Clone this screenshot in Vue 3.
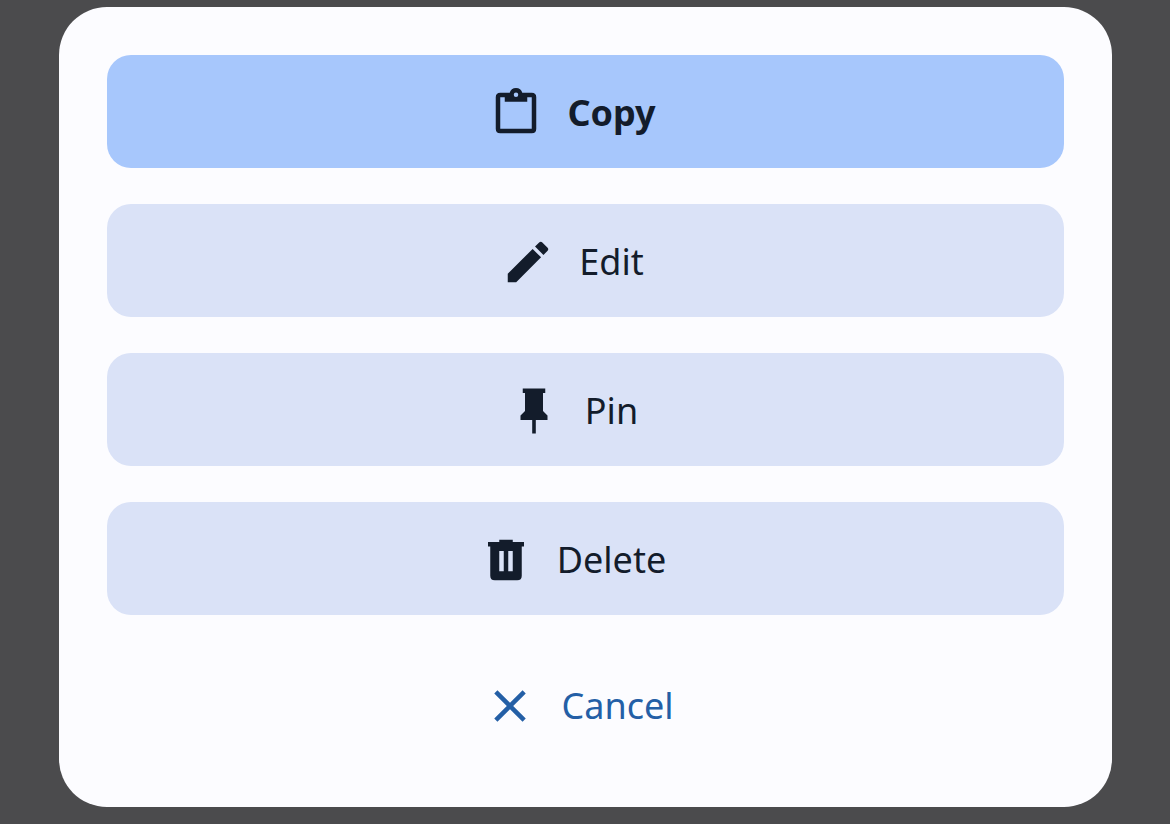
<script setup>
const actions = [
  { id: 'copy', label: 'Copy' },
  { id: 'edit', label: 'Edit' },
  { id: 'pin', label: 'Pin' },
  { id: 'delete', label: 'Delete' },
  { id: 'cancel', label: 'Cancel' },
]

const paths = {
  copy: 'M5 3H9.2A2.9 2.9 0 0 1 14.8 3H19Q21 3 21 5V19Q21 21 19 21H5Q3 21 3 19V5Q3 3 5 3ZM5 5V19H19V5H17V7H7V5ZM12 2.9A1 1 0 1 0 12 4.9A1 1 0 1 0 12 2.9Z',
  edit: 'M20.71 7.04C21.1 6.65 21.1 6 20.71 5.63L18.37 3.29C18 2.9 17.35 2.9 16.96 3.29L15.12 5.12L18.87 8.87M3 17.25V21H6.75L17.81 9.93L14.06 6.18L3 17.25Z',
  pin: 'M16 12V4H17V2H7V4H8V12L6 14V16H11.2V22H12.8V16H18V14Z',
  delete: 'M4 4H9V3H15V4H20V6H19V19Q19 21 17 21H7Q5 21 5 19V6H4ZM9 8V17H11V8ZM13 8V17H15V8Z',
  cancel: 'M19 6.41L17.59 5L12 10.59L6.41 5L5 6.41L10.59 12L5 17.59L6.41 19L12 13.41L17.59 19L19 17.59L13.41 12Z',
}
</script>

<template>
  <main class="scrim">
    <section class="sheet" role="dialog" aria-label="Message actions">
      <button
        v-for="action in actions"
        :key="action.id"
        type="button"
        class="action"
        :class="action.id"
      >
        <svg class="icon" viewBox="0 0 24 24" aria-hidden="true">
          <path :d="paths[action.id]" fill="currentColor" fill-rule="evenodd" />
        </svg>
        <span class="label">{{ action.label }}</span>
      </button>
    </section>
  </main>
</template>

<style>
body {
  margin: 0;
  background: #4b4b4d;
}
</style>

<style scoped>
.scrim {
  box-sizing: border-box;
  min-height: 100vh;
  padding: 7px 58px 17px 59px;
  background: #4b4b4d;
}

.sheet {
  box-sizing: border-box;
  display: flex;
  flex-direction: column;
  gap: 36px;
  padding: 48px 48px 46px;
  border-radius: 48px;
  background: #fcfcff;
}

.action {
  box-sizing: border-box;
  display: flex;
  align-items: center;
  justify-content: center;
  width: 100%;
  margin: 0;
  padding: 31px 26px 28px 24px;
  border: 0;
  border-radius: 24px;
  background: #dae2f7;
  color: #131c2b;
  font: 400 36px/54px "Noto Sans", sans-serif;
  cursor: pointer;
}

.copy {
  background: #a7c7fc;
  font-weight: 700;
}

.cancel {
  margin-top: -3px;
  padding-left: 36px;
  background: transparent;
  color: #245fa6;
}

.icon {
  flex: none;
  width: 54px;
  height: 54px;
}

.label {
  padding: 0 24px;
}
</style>
